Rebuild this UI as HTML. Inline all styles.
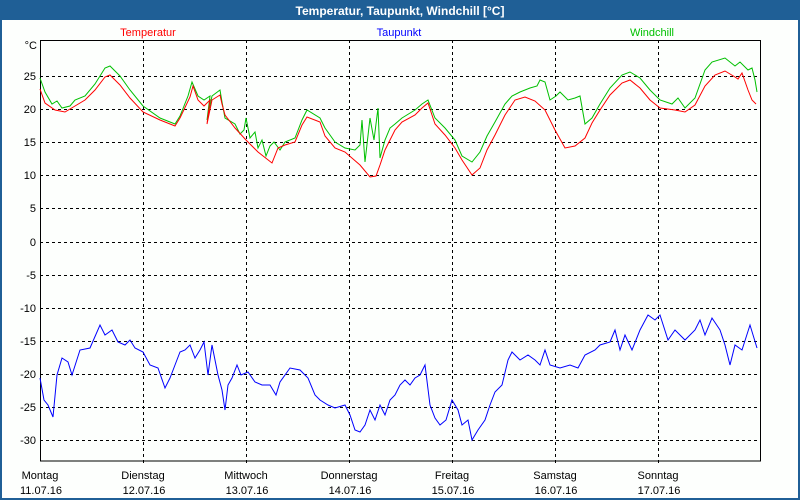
<!DOCTYPE html>
<html><head><meta charset="utf-8"><style>
html,body{margin:0;padding:0;width:800px;height:500px;overflow:hidden;background:#1f5f96;}
svg{display:block}
text{font-family:"Liberation Sans","DejaVu Sans",sans-serif;font-size:11px;}
</style></head><body>
<svg width="800" height="500" viewBox="0 0 800 500" xmlns="http://www.w3.org/2000/svg">
<rect x="0" y="0" width="800" height="500" fill="#1f5f96"/>
<rect x="2" y="20" width="796" height="478" fill="#fdfffd"/>
<text x="400" y="15" text-anchor="middle" fill="#fff" font-weight="bold" style="font-size:12px">Temperatur, Taupunkt, Windchill [°C]</text>
<text x="148" y="36" text-anchor="middle" fill="#ff0000">Temperatur</text>
<text x="399" y="36" text-anchor="middle" fill="#0000ff">Taupunkt</text>
<text x="652" y="36" text-anchor="middle" fill="#00c000">Windchill</text>
<g stroke="#000" stroke-width="1" stroke-dasharray="3,3" shape-rendering="crispEdges">
<line x1="143.5" y1="40" x2="143.5" y2="466"/><line x1="246.5" y1="40" x2="246.5" y2="466"/><line x1="349.5" y1="40" x2="349.5" y2="466"/><line x1="452.5" y1="40" x2="452.5" y2="466"/><line x1="555.5" y1="40" x2="555.5" y2="466"/><line x1="658.5" y1="40" x2="658.5" y2="466"/>
<line x1="40" y1="76.5" x2="760" y2="76.5"/><line x1="40" y1="109.5" x2="760" y2="109.5"/><line x1="40" y1="142.5" x2="760" y2="142.5"/><line x1="40" y1="175.5" x2="760" y2="175.5"/><line x1="40" y1="208.5" x2="760" y2="208.5"/><line x1="40" y1="242.5" x2="760" y2="242.5"/><line x1="40" y1="275.5" x2="760" y2="275.5"/><line x1="40" y1="308.5" x2="760" y2="308.5"/><line x1="40" y1="341.5" x2="760" y2="341.5"/><line x1="40" y1="374.5" x2="760" y2="374.5"/><line x1="40" y1="407.5" x2="760" y2="407.5"/><line x1="40" y1="440.5" x2="760" y2="440.5"/>
</g>
<rect x="40.5" y="40.5" width="720" height="420.5" fill="none" stroke="#000" shape-rendering="crispEdges"/>
<g fill="#000" text-anchor="end">
<text x="37" y="49">°C</text>
<text x="36" y="80">25</text><text x="36" y="113">20</text><text x="36" y="146">15</text><text x="36" y="179">10</text><text x="36" y="212">5</text><text x="36" y="246">0</text><text x="36" y="279">-5</text><text x="36" y="312">-10</text><text x="36" y="345">-15</text><text x="36" y="378">-20</text><text x="36" y="411">-25</text><text x="36" y="444">-30</text>
</g>
<g fill="#000" text-anchor="middle">
<text x="40" y="479">Montag</text><text x="41" y="494">11.07.16</text>
<text x="143" y="479">Dienstag</text><text x="144" y="494">12.07.16</text>
<text x="246" y="479">Mittwoch</text><text x="247" y="494">13.07.16</text>
<text x="349" y="479">Donnerstag</text><text x="350" y="494">14.07.16</text>
<text x="452" y="479">Freitag</text><text x="453" y="494">15.07.16</text>
<text x="555" y="479">Samstag</text><text x="556" y="494">16.07.16</text>
<text x="658" y="479">Sonntag</text><text x="659" y="494">17.07.16</text>
</g>
<polyline fill="none" stroke="#00c000" stroke-width="1" points="40,78 45,92 52,104 57,101 62,108 70,106 75,100 85,96 95,84 105,68 110,66 120,76 130,90 143,106 160,118 175,124 180,116 188,96 192,82 198,96 204,100 210,96 207,120 212,96 220,90 222,102 225,118 235,124 240,134 244,130 246,118 250,138 255,132 258,148 262,140 266,156 270,146 274,142 280,150 285,142 295,138 302,120 307,110 320,118 325,128 335,142 345,148 355,150 360,145 362,120 365,162 370,118 374,140 378,108 380,158 385,140 390,128 395,124 402,118 415,110 422,104 428,100 435,118 445,128 455,140 462,156 472,162 480,152 487,136 495,122 505,104 512,96 520,92 530,88 537,86 540,80 545,82 550,100 556,96 560,92 568,100 575,98 580,96 585,124 592,118 600,104 610,88 622,75 630,72 640,78 650,90 660,100 672,104 678,98 685,108 695,98 705,70 712,62 725,58 735,66 740,62 748,70 752,68 755,80 757,92"/>
<polyline fill="none" stroke="#ff0000" stroke-width="1" points="40,89 45,103 55,110 65,112 75,106 85,100 95,90 105,77 110,75 120,85 130,98 143,112 160,120 175,126 180,118 190,97 193,86 198,100 204,106 210,100 207,124 212,100 220,95 222,104 225,115 235,128 246,140 258,152 272,163 278,148 285,145 295,142 302,125 307,117 320,122 325,136 335,148 345,152 360,165 370,177 376,176 380,165 385,150 395,130 402,122 415,115 422,108 428,103 435,124 445,135 455,148 462,160 472,175 480,168 487,150 495,135 505,115 515,100 525,97 535,101 545,110 555,130 565,148 575,146 585,138 592,123 600,110 610,95 622,83 630,80 640,88 650,100 660,108 675,110 685,112 695,105 705,86 715,75 725,71 735,77 738,79 742,73 748,90 752,100 756,104"/>
<polyline fill="none" stroke="#0000ff" stroke-width="1" points="40,378 44,400 48,405 53,417 57,375 62,358 68,362 72,375 80,350 90,348 100,325 105,335 112,330 118,342 125,345 130,340 135,348 143,352 150,365 158,368 165,388 170,378 175,365 180,352 185,350 190,345 195,358 200,350 204,342 208,375 212,345 218,375 222,390 225,410 228,385 232,378 237,365 241,375 248,372 255,382 262,385 270,385 276,395 280,382 290,368 300,370 308,378 315,395 320,400 328,405 335,408 345,405 350,415 355,430 360,432 365,425 370,410 375,420 380,405 385,415 390,400 395,395 400,385 405,380 410,385 415,378 420,375 425,365 430,405 435,418 440,425 446,420 452,400 458,410 462,425 468,420 472,440 478,430 485,420 490,405 495,392 502,385 508,360 512,352 520,360 528,355 535,360 540,365 545,350 550,365 560,368 570,365 578,368 585,355 595,350 600,345 610,342 615,330 620,350 625,335 632,350 640,330 648,315 655,320 660,315 668,340 675,330 685,340 695,330 700,320 705,335 712,318 720,330 725,345 730,365 735,345 742,350 750,325 757,348"/>
</svg>
</body></html>
